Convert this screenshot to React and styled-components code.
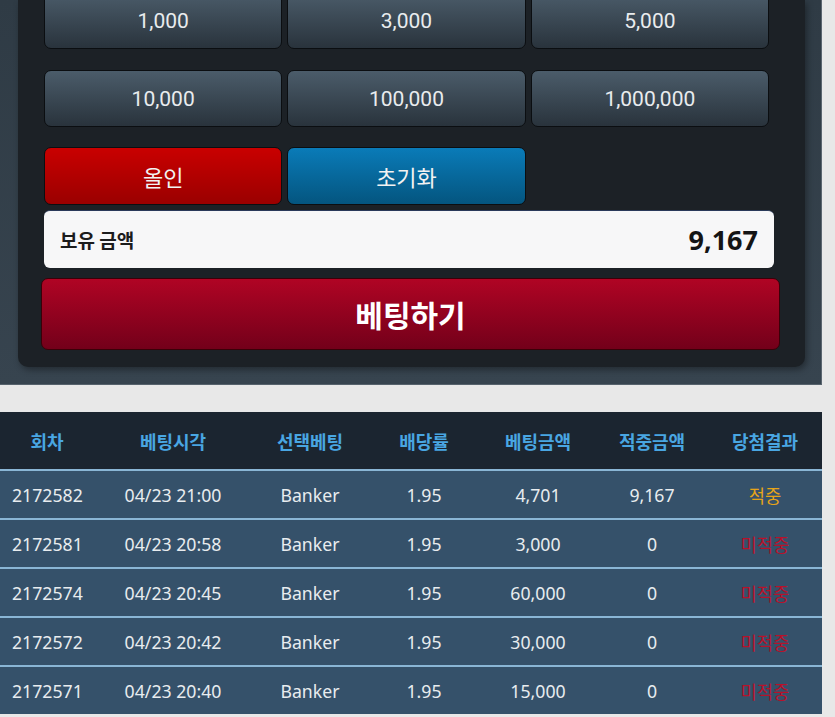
import React from 'react';
import styled, { createGlobalStyle } from 'styled-components';

const GlobalStyle = createGlobalStyle`
  html, body {
    margin: 0;
    padding: 0;
    background: #e8e8e8;
    overflow: hidden;
  }
  body {
    font-family: "Noto Sans", "Noto Sans CJK KR", sans-serif;
  }
`;

const Page = styled.div`
  width: 835px;
  height: 717px;
  overflow: hidden;
  background: #e8e8e8;
`;

const Outer = styled.div`
  width: 822px;
  background: linear-gradient(180deg, #2f3b45 0%, #37444f 100%);
  border-right: 1px solid #5b6670;
  border-bottom: 1px solid #56626c;
  padding: 0 16px 17px 18px;
  box-sizing: border-box;
`;

const Inner = styled.div`
  background: #1c2126;
  border-radius: 0 0 10px 10px;
  box-shadow: 2px 3px 6px rgba(0, 0, 0, 0.35);
  padding: 0 7px 17px 23px;
  display: flex;
  flex-direction: column;
`;

const Grid = styled.div`
  display: grid;
  grid-template-columns: repeat(3, 1fr);
  width: 730px;
  margin: -8px 0 0 3px;
  row-gap: ${p => p.$gap}px;
`;

const ChipButton = styled.div`
  height: 57px;
  width: calc(100% - 5px);
  box-sizing: border-box;
  border: 1px solid #0b0e11;
  border-radius: 7px;
  background: linear-gradient(180deg, #4b5c6a 0%, #29333c 100%);
  color: #e9ecee;
  font-family: "Roboto", "Noto Sans CJK KR", sans-serif;
  font-size: 21px;
  display: flex;
  align-items: center;
  justify-content: center;
`;

const ActionRow = styled.div`
  display: grid;
  grid-template-columns: repeat(3, 1fr);
  width: 730px;
  margin: 20px 0 0 3px;
`;

const ActionButton = styled.div`
  height: 58px;
  width: calc(100% - 5px);
  box-sizing: border-box;
  border: 1px solid #0b0e11;
  border-radius: 7px;
  background: ${p =>
    p.$tone === 'red'
      ? 'linear-gradient(180deg, #c90000 0%, #9a0000 100%)'
      : 'linear-gradient(180deg, #0a7bb8 0%, #04557f 100%)'};
  color: #f2f2f2;
  font-family: "Noto Sans CJK KR", sans-serif;
  font-size: 22px;
  display: flex;
  align-items: center;
  justify-content: center;
`;

const Balance = styled.div`
  width: 730px;
  height: 58px;
  box-sizing: border-box;
  margin: 5px 0 0 3px;
  background: #f7f7f8;
  border-top: 1px solid #2a3a5a;
  border-radius: 6px;
  display: flex;
  align-items: center;
  justify-content: space-between;
  padding: 0 16px 0 16px;
`;

const BalanceLabel = styled.span`
  font-family: "Noto Sans CJK KR", sans-serif;
  font-weight: 700;
  font-size: 19px;
  color: #1c1c1c;
`;

const BalanceValue = styled.span`
  font-family: "Noto Sans", sans-serif;
  font-weight: 700;
  font-size: 27px;
  color: #141414;
`;

const BetButton = styled.div`
  width: 739px;
  height: 72px;
  box-sizing: border-box;
  margin: 10px 0 0 0;
  border: 1px solid #3a0008;
  border-radius: 7px;
  background: linear-gradient(180deg, #b00424 0%, #73001a 100%);
  color: #ffffff;
  font-family: "Noto Sans CJK KR", sans-serif;
  font-weight: 700;
  font-size: 30px;
  display: flex;
  align-items: center;
  justify-content: center;
`;

const Table = styled.table`
  margin-top: 27px;
  width: 822px;
  border-collapse: collapse;
  table-layout: fixed;
`;

const HeadCell = styled.th`
  height: 57px;
  padding: 0;
  background: #1b2530;
  color: #49a6e2;
  font-family: "Noto Sans CJK KR", sans-serif;
  font-weight: 700;
  font-size: 18px;
  text-align: center;
`;

const Row = styled.tr`
  border-top: 2px solid #8ab6d5;
  background: #35516a;
`;

const Cell = styled.td`
  height: 47px;
  padding: 0;
  text-align: ${p => (p.$left ? 'left' : 'center')};
  padding-left: ${p => (p.$left ? '12px' : '0')};
  color: ${p => p.$color || '#e8ecef'};
  font-family: "Noto Sans", "Noto Sans CJK KR", sans-serif;
  font-size: 17.7px;
`;

const chips = [
  ['1,000', '3,000', '5,000'],
  ['10,000', '100,000', '1,000,000'],
];

const columns = [
  { title: '회차', width: 94 },
  { title: '베팅시각', width: 158 },
  { title: '선택베팅', width: 116 },
  { title: '배당률', width: 112 },
  { title: '베팅금액', width: 116 },
  { title: '적중금액', width: 112 },
  { title: '당첨결과', width: 114 },
];

const history = [
  ['2172582', '04/23 21:00', 'Banker', '1.95', '4,701', '9,167', '적중'],
  ['2172581', '04/23 20:58', 'Banker', '1.95', '3,000', '0', '미적중'],
  ['2172574', '04/23 20:45', 'Banker', '1.95', '60,000', '0', '미적중'],
  ['2172572', '04/23 20:42', 'Banker', '1.95', '30,000', '0', '미적중'],
  ['2172571', '04/23 20:40', 'Banker', '1.95', '15,000', '0', '미적중'],
];

const resultColor = r => (r === '적중' ? '#e6a419' : '#b8112a');

const App = () => {
  return (
    <Page>
      <GlobalStyle />
      <Outer>
        <Inner>
          <Grid $gap={21}>
            {chips.flat().map(c => (
              <ChipButton key={c}>{c}</ChipButton>
            ))}
          </Grid>
          <ActionRow>
            <ActionButton $tone="red">올인</ActionButton>
            <ActionButton $tone="blue">초기화</ActionButton>
          </ActionRow>
          <Balance>
            <BalanceLabel>보유 금액</BalanceLabel>
            <BalanceValue>9,167</BalanceValue>
          </Balance>
          <BetButton>베팅하기</BetButton>
        </Inner>
      </Outer>

      <Table>
        <colgroup>
          {columns.map(c => (
            <col key={c.title} style={{ width: c.width }} />
          ))}
        </colgroup>
        <thead>
          <tr>
            {columns.map(c => (
              <HeadCell key={c.title}>{c.title}</HeadCell>
            ))}
          </tr>
        </thead>
        <tbody>
          {history.map(row => (
            <Row key={row[0]}>
              {row.map((v, i) => (
                <Cell
                  key={i}
                  $left={i === 0}
                  $color={i === 6 ? resultColor(v) : undefined}
                >
                  {v}
                </Cell>
              ))}
            </Row>
          ))}
        </tbody>
      </Table>
    </Page>
  );
};

export default App;
